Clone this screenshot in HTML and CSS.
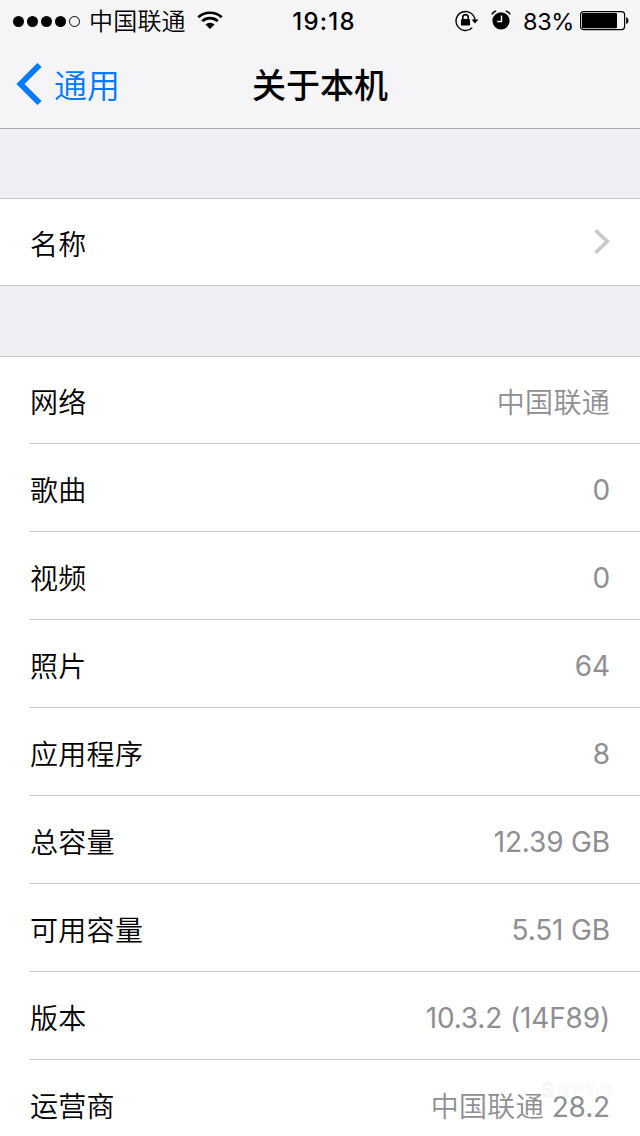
FILE: index.html
```html
<!DOCTYPE html>
<html lang="zh-CN">
<head>
<meta charset="UTF-8">
<meta name="viewport" content="width=device-width, initial-scale=1.0">
<title>关于本机</title>
<link rel="stylesheet" href="styles.css">
</head>
<body>

<header>
    <!-- Status Bar -->
    <div class="status-bar">
        <div class="status-left">
            <div class="signal">
                <i></i><i></i><i></i><i></i><i class="empty"></i>
            </div>
            <span class="carrier">中国联通</span>
            <svg class="wifi" width="26" height="19" viewBox="0 0 24 19" preserveAspectRatio="none">
                <path d="M1.2 6.2a15.4 15.4 0 0 1 21.6 0M4.8 10.1a10.2 10.2 0 0 1 14.4 0" fill="none" stroke="#000" stroke-width="2.6"/>
                <path d="M7.8 13.4a6.2 6.2 0 0 1 8.4 0L12 18z"/>
            </svg>
        </div>
        <span class="time">19:18</span>
        <div class="status-right">
            <svg class="lock" width="24" height="22" viewBox="0 0 24 22">
                <path d="M17.2 17.8A9.5 9.5 0 1 1 20 10" fill="none" stroke="#000" stroke-width="1.4"/>
                <path d="M16.5 9.5h7L20 13.6z"/>
                <rect x="6" y="9" width="9" height="6.6" rx="0.6"/>
                <path d="M7.8 9.5V7.3a2.7 2.7 0 0 1 5.4 0v2.2" fill="none" stroke="#000" stroke-width="1.6"/>
            </svg>
            <svg class="alarm" width="20" height="20" viewBox="0 0 20 20">
                <circle cx="10" cy="10.8" r="8.6"/>
                <path d="M.9 4.4A6 6 0 0 1 5.2 1M19.1 4.4A6 6 0 0 0 14.8 1" fill="none" stroke="#000" stroke-width="1.5"/>
                <path d="M10.5 5.5v6H6.2" fill="none" stroke="#f5f5f7" stroke-width="1.5"/>
            </svg>
            <span class="percent">83%</span>
            <svg class="battery" width="50" height="20" viewBox="0 0 50 20">
                <rect x="0.6" y="0.6" width="44" height="18" rx="3" fill="none" stroke="#000" stroke-width="1.2"/>
                <rect x="2" y="2" width="35" height="15.2" rx="1.2"/>
                <path d="M46.2 6.2c3 .6 3 6.2 0 6.8z"/>
            </svg>
        </div>
    </div>

    <!-- Navigation -->
    <nav>
        <a class="back" href="#">
            <svg width="27" height="42" viewBox="0 0 27 42">
                <path d="M23.5 2L4.5 21l19 19" fill="none" stroke="#007aff" stroke-width="5.8"/>
            </svg>
            <span>通用</span>
        </a>
        <h1>关于本机</h1>
    </nav>
</header>

<ul class="group">
    <li>
        <span>名称</span>
        <svg class="arrow" width="16" height="26" viewBox="0 0 16 26">
            <path d="M1.5 1.2L13.2 12.5 1.5 23.8" fill="none" stroke="#c7c7cc" stroke-width="3.6"/>
        </svg>
    </li>
</ul>

<ul class="group">
    <li><span>网络</span><span class="value">中国联通</span></li>
    <li><span>歌曲</span><span class="value num">0</span></li>
    <li><span>视频</span><span class="value num">0</span></li>
    <li><span>照片</span><span class="value num">64</span></li>
    <li><span>应用程序</span><span class="value num">8</span></li>
    <li><span>总容量</span><span class="value num">12.39 GB</span></li>
    <li><span>可用容量</span><span class="value num">5.51 GB</span></li>
    <li><span>版本</span><span class="value num">10.3.2 (14F89)</span></li>
    <li><span>运营商</span><span class="value">中国联通<span class="num"> 28.2</span></span></li>
</ul>

<div class="watermark"><b>S</b><span>搜狗指南</span></div>

</body>
</html>
```
FILE: styles.css
```css
* {
box-sizing: border-box;
}
body {
margin: 0;
height: 1136px;
overflow: hidden;
position: relative;
background-color: #efeff4;
color: #000;
font-family: Inter, "Noto Sans CJK SC", sans-serif;
font-weight: 350;
}
header {
height: 129px;
background-color: #f5f5f7;
border-bottom: 1px solid #a9a9b0;
}
.status-bar {
height: 40px;
display: grid;
grid-template-columns: 1fr auto 1fr;
align-items: center;
padding: 1px 10px 0 13px;
font-size: 24px;
line-height: 40px;
}
.status-left, .status-right {
display: flex;
align-items: center;
}
.status-right {
justify-content: flex-end;
}
.signal {
display: flex;
gap: 3px;
margin-top: -1px;
}
.signal i {
width: 11px;
height: 11px;
border-radius: 50%;
background-color: #000;
}
.signal .empty {
background: none;
border: 1px solid #000;
}
.carrier {
margin-left: 9px;
padding-top: 1px;
letter-spacing: 0.2px;
}
.wifi {
margin-left: 11px;
margin-top: -2px;
}
.time {
margin-left: 5px;
font-weight: 500;
letter-spacing: 1.2px;
}
.lock {
margin-top: -2px;
}
.alarm {
margin-left: 12px;
margin-top: -3px;
}
.percent {
margin-left: 12px;
font-size: 23.5px;
font-weight: 400;
letter-spacing: -0.4px;
}
.battery {
margin-left: 6px;
margin-top: -1px;
}
nav {
height: 88px;
display: grid;
grid-template-columns: 1fr auto 1fr;
align-items: center;
padding: 0 16px;
}
.back {
display: flex;
align-items: center;
gap: 11px;
color: #007aff;
font-size: 33px;
text-decoration: none;
}
.back span {
margin-top: -1px;
}
h1 {
margin: -1px 0 0;
font-size: 34px;
font-weight: 500;
}
.group {
list-style: none;
margin: 69px 0 0;
padding: 0 0 0 30px;
background-color: #fff;
border-top: 1px solid #c8c7cc;
border-bottom: 1px solid #c8c7cc;
}
.group + .group {
margin-top: 70px;
}
.group li {
height: 88px;
display: flex;
align-items: center;
justify-content: space-between;
padding: 2px 30px 0 0;
border-bottom: 1px solid #c8c7cc;
font-size: 28px;
letter-spacing: 0.3px;
}
.group li:first-child {
height: 87px;
padding-top: 1px;
}
.group li:only-child {
height: 86px;
border-bottom: none;
}
.arrow {
margin-top: -2px;
}
.value {
color: #8e8e93;
}
.num {
font-weight: 400;
letter-spacing: -0.15px;
}
.value.num {
padding-top: 2px;
}
.watermark {
position: absolute;
left: 541px;
top: 1080px;
display: flex;
align-items: center;
gap: 3px;
color: rgba(236, 236, 236, 0.5);
font-size: 14px;
line-height: 20px;
}
.watermark b {
font-size: 20px;
}
```
